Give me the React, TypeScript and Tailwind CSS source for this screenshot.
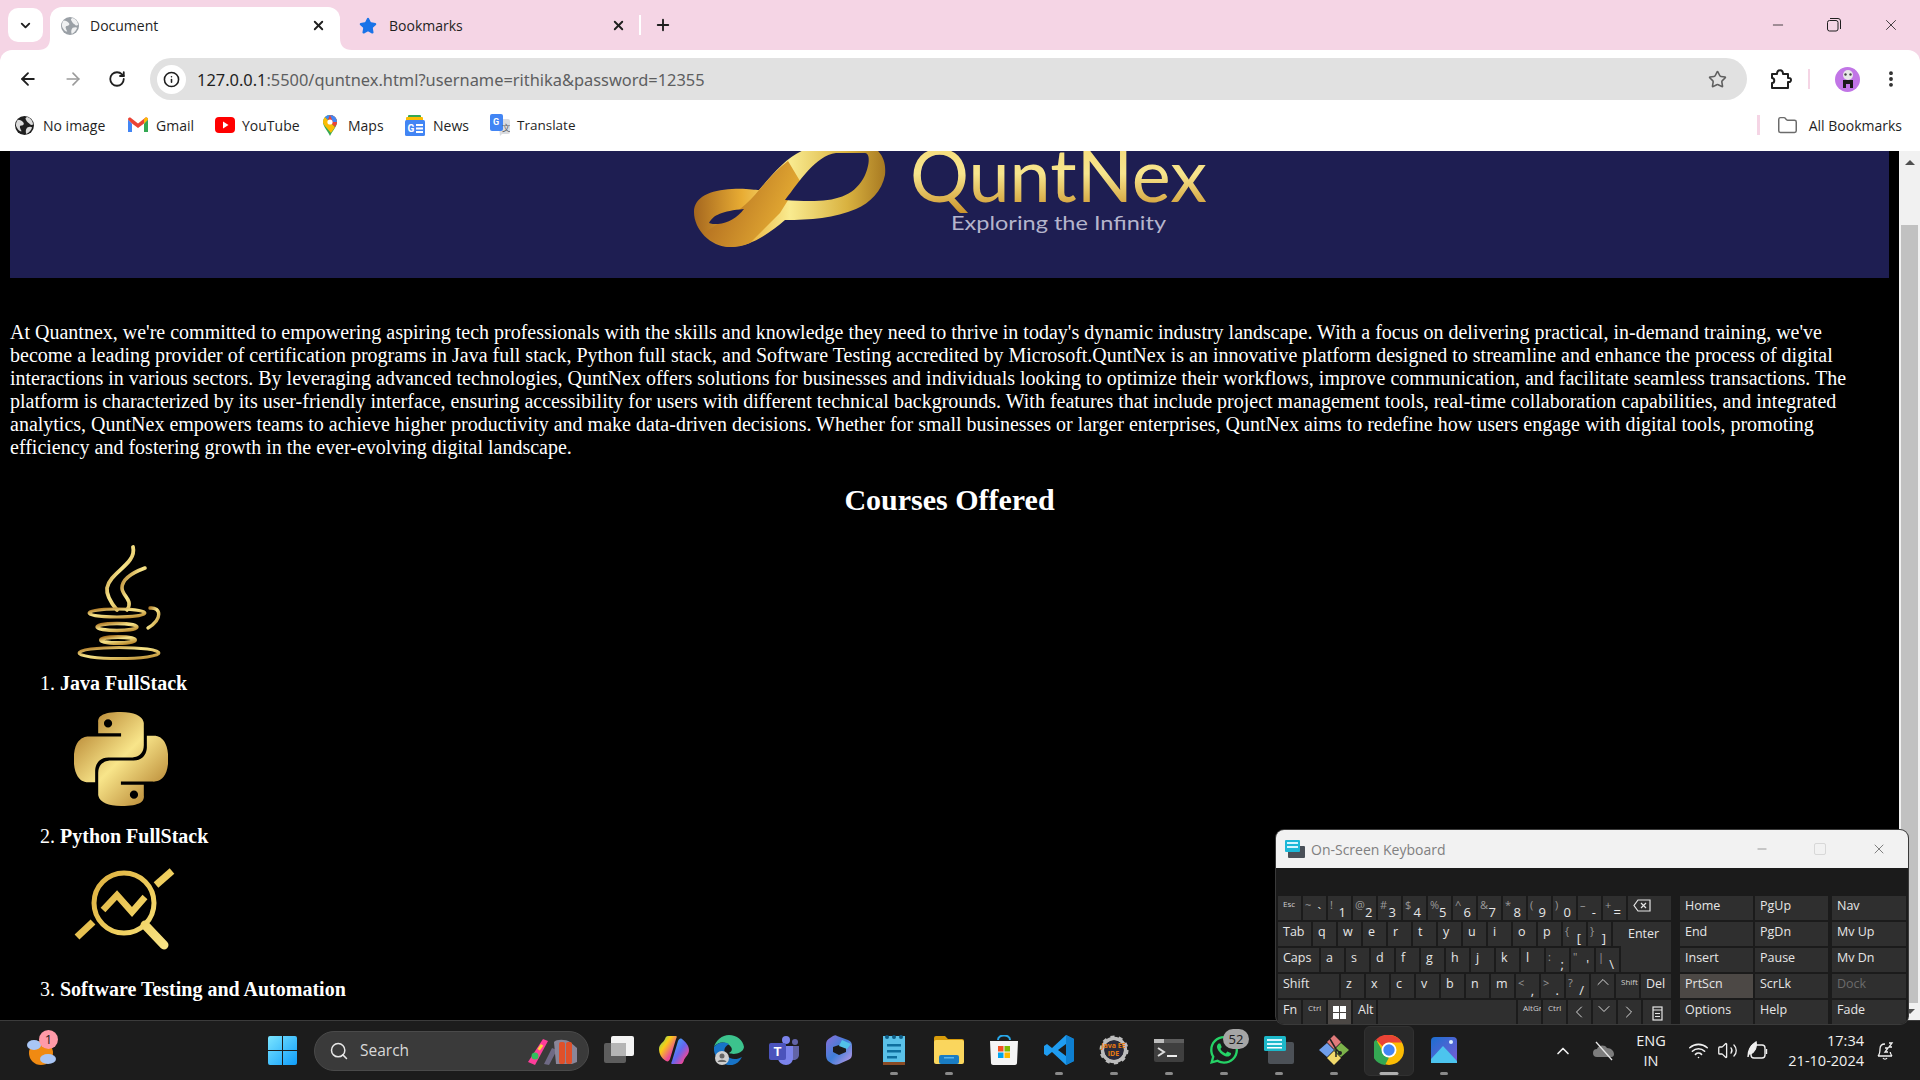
import React from "react";
import { ArrowLeft, ArrowRight, RotateCw, Info, Star, X, Plus, ChevronDown, Minus, Folder, EllipsisVertical, Search, ChevronUp, ChevronLeft, ChevronRight, Wifi, Volume2 } from "lucide-react";
import { SiPython } from "react-icons/si";
import { FaWhatsapp } from "react-icons/fa";

const Globe = ({ c = "#9aa0a6", s = 18 }: { c?: string; s?: number }) => (
  <svg width={s} height={s} viewBox="0 0 20 20">
    <circle cx="10" cy="10" r="10" fill={c} />
    <path d="M3 4c3 0 4 1 6 3 1 2-1 3-3 3-2 1 0 4 1 6-2 1-5-3-6-6 0-3 1-5 2-6zM13 1c3 1 6 4 6 8-2 1-3 0-4-1-2-1-3-3-4-5 0-1 1-2 2-2zM13 12c2-1 4-1 5 0-1 3-3 5-6 7-1-2-1-5 1-7z" fill="#fff" opacity="0.85" />
  </svg>
);

const Gmail = () => (
  <svg width="20" height="16" viewBox="0 0 20 16">
    <path d="M0 2.5V15h4V6.5z" fill="#4285f4" />
    <path d="M16 6.5V15h4V2.5z" fill="#34a853" />
    <path d="M0 2.5C0 .5 2 0 3 1l7 5.5L17 1c1-1 3-.5 3 1.5L16 6.5 10 11 4 6.5z" fill="#ea4335" />
    <path d="M16 2.5l1-1.5c1-1 3-.5 3 1.5L16 6.5z" fill="#fbbc04" />
  </svg>
);
const YouTube = () => (
  <svg width="20" height="16" viewBox="0 0 20 16">
    <rect width="20" height="16" rx="4" fill="#f00" />
    <path d="M8 4.5l5.5 3.5L8 11.500z" fill="#fff" />
  </svg>
);
const Maps = () => (
  <svg width="14" height="21" viewBox="0 0 14 21">
    <path d="M7 21C5 16 0 12 0 7a7 7 0 0 1 14 0c0 5-5 9-7 14z" fill="#34a853" />
    <path d="M2 2L12 12c-1 2-3 4-4 6L1.500 10.500C.5 9 0 8 0 7c0-2 1-4 2-5z" fill="#fbbc04" />
    <path d="M2 2a7 7 0 0 1 5-2l-2 5z" fill="#4285f4" />
    <path d="M7 0a7 7 0 0 1 7 7c0 2-1 3.500-2 5L5 5z" fill="#ea4335" />
    <path d="M7 0a7 7 0 0 1 7 7h-4z" fill="#4285f4" />
    <circle cx="7" cy="7" r="2.600" fill="#fff" />
  </svg>
);
const News = () => (
  <svg width="20" height="21" viewBox="0 0 20 21">
    <rect x="3" y="0" width="13" height="8" rx="1" fill="#34a853" />
    <rect x="1" y="2" width="17" height="7" rx="1" fill="#fbbc04" />
    <rect x="0" y="5" width="20" height="16" rx="1.500" fill="#4285f4" />
    <text x="2.500" y="17" fontSize="10" fontWeight="700" fill="#fff" fontFamily="Roboto">G</text>
    <rect x="11" y="9" width="7" height="2" fill="#fff" />
    <rect x="11" y="12.500" width="7" height="2" fill="#fff" />
    <rect x="11" y="16" width="7" height="2" fill="#fff" />
  </svg>
);
const Translate = () => (
  <svg width="20" height="22" viewBox="0 0 20 22">
    <path d="M8 5h10a2 2 0 0 1 2 2v11a2 2 0 0 1-2 2h-6l-2 2z" fill="#dadce0" />
    <rect x="0" y="0" width="13" height="17" rx="2" fill="#4285f4" />
    <text x="3" y="11" fontSize="9" fontWeight="700" fill="#fff" fontFamily="Roboto">G</text>
    <text x="12" y="17" fontSize="9" fill="#5f6368" fontFamily="Roboto">文</text>
  </svg>
);

const TabCorner = ({ side }: { side: "l" | "r" }) => (
  <svg width="12" height="12" viewBox="0 0 12 12" className={side === "l" ? "absolute bottom-0 -left-[12px]" : "absolute bottom-0 -right-[12px]"}>
    <path d={side === "l" ? "M12 0V12H0C8 12 12 8 12 0z" : "M0 0V12H12C4 12 0 8 0 0z"} fill="#fff" />
  </svg>
);

function Chrome() {
  return (
    <div className="shrink-0 bg-[#f5d5e5]">
      <div className="h-[50px] flex items-start relative">
        <div className="ml-[8px] mt-[8px] w-[35px] h-[34px] rounded-[10px] bg-white flex items-center justify-center">
          <ChevronDown size={15} strokeWidth={3} color="#1f1f1f" />
        </div>
        <div className="relative ml-[7px] mt-[7px] w-[290px] h-[43px] bg-white rounded-t-[12px] flex items-center pb-[6px] pl-[11px] pr-[14px]">
          <TabCorner side="l" />
          <TabCorner side="r" />
          <Globe />
          <span className="ml-[11px] text-[14px] text-[#1f1f1f] flex-1">Document</span>
          <X size={15} strokeWidth={3} color="#1f1f1f" />
        </div>
        <div className="w-[300px] h-[43px] mt-[7px] flex items-center pb-[6px] pl-[19px] pr-[14px]">
          <Star size={18} fill="#1a73e8" color="#1a73e8" />
          <span className="ml-[12px] text-[14px] text-[#1f1f1f] flex-1">Bookmarks</span>
          <X size={15} strokeWidth={3} color="#1f1f1f" />
        </div>
        <div className="w-[2px] h-[20px] mt-[15px] -ml-[1px] bg-white" />
        <Plus size={18} strokeWidth={2.500} color="#1f1f1f" className="ml-[13px] mt-[16px]" />
        <div className="ml-auto flex items-center h-[50px] pb-[1px] pr-[20px] gap-[41px]">
          <Minus size={16} strokeWidth={1.200} color="#1f1f1f" />
          <svg width="14" height="14" viewBox="0 0 14 14" fill="none" stroke="#1f1f1f" strokeWidth="1"><rect x="0.500" y="2.500" width="10.500" height="10.500" rx="2" /><path d="M3 .5h8a2.500 2.500 0 0 1 2.500 2.500v8" /></svg>
          <X size={18} strokeWidth={1.100} color="#1f1f1f" />
        </div>
      </div>
      <div className="bg-white rounded-t-[12px]">
        <div className="h-[50px] flex items-start pt-[8px]">
          <div className="w-[150px] h-[42px] flex items-center pl-[18px] gap-[25px]">
            <ArrowLeft size={20} strokeWidth={2.200} color="#1f1f1f" />
            <ArrowRight size={20} strokeWidth={2} color="#9b9b9b" />
            <RotateCw size={18} strokeWidth={2.400} color="#1f1f1f" />
          </div>
          <div className="w-[1597px] h-[42px] rounded-full bg-[#e1e1e1] flex items-center pl-[7px] pr-[20px]">
            <div className="w-[29px] h-[29px] rounded-full bg-white flex items-center justify-center">
              <Info size={17} strokeWidth={2.200} color="#1f1f1f" />
            </div>
            <span className="ml-[11px] pt-[2px] text-[16.400px] text-[#5d5e60] flex-1 font-['Noto_Sans']"><span className="text-[#1f1f1f]">127.0.0.1</span>:5500/quntnex.html?username=rithika&password=12355</span>
            <Star size={19} strokeWidth={2} color="#5f5f5f" />
          </div>
          <div className="flex-1 h-[42px] flex items-center relative">
            <svg width="22" height="22" viewBox="0 0 22 22" className="ml-[23px]" fill="none" stroke="#1f1f1f" strokeWidth="2" strokeLinejoin="round"><path d="M2 6h5c0-5 6-5 6 0h5v4c4-1 4 5 0 4v6H2v-5c3 0 3-5 0-5z" /></svg>
            <div className="ml-[16px] w-[2px] h-[20px] bg-[#f5d5e5]" />
            <div className="ml-[25px] w-[25px] h-[25px] rounded-full bg-[#c175e6] flex items-center justify-center overflow-hidden">
              <svg width="16" height="20" viewBox="0 0 16 20"><circle cx="8" cy="6" r="5" fill="#e8e8e8" /><circle cx="5.500" cy="5.500" r="1.200" fill="#444" /><circle cx="10.500" cy="5.500" r="1.200" fill="#444" /><path d="M3 11h10v8h-3v-4H6v4H3z" fill="#1a1a1a" /></svg>
            </div>
            <EllipsisVertical size={20} strokeWidth={2.600} color="#2a2a2a" className="ml-[21px]" />
          </div>
        </div>
        <div className="h-[51px] flex items-center pb-[1px] text-[14px] text-[#1f1f1f]">
          <div className="ml-[15px] w-[20px]"><Globe c="#1f1f1f" s={19} /></div>
          <span className="ml-[8px] w-[85px]">No image</span>
          <Gmail />
          <span className="ml-[8px] w-[59px]">Gmail</span>
          <YouTube />
          <span className="ml-[7px] w-[81px]">YouTube</span>
          <Maps />
          <span className="ml-[11px] w-[57px]">Maps</span>
          <News />
          <span className="ml-[8px] w-[57px]">News</span>
          <Translate />
          <span className="ml-[7px] text-[13.500px]">Translate</span>
          <div className="ml-auto w-[3px] h-[20px] bg-[#f5d5e5]" />
          <Folder size={21} strokeWidth={1.700} color="#6b6b6b" className="ml-[17px]" />
          <span className="ml-[11px] mr-[18px]">All Bookmarks</span>
        </div>
      </div>
    </div>
  );
}

function Banner() {
  return (
    <div className="h-[127px] bg-[#1e1e52] overflow-hidden">
      <svg width="1879" height="127" viewBox="0 0 1879 127" className="block">
        <defs>
          <linearGradient id="rib" x1="0" x2="1" y1="0" y2="0">
            <stop offset="0" stopColor="#a5671f" />
            <stop offset="0.25" stopColor="#e8ac33" />
            <stop offset="0.5" stopColor="#f9eb90" />
            <stop offset="0.8" stopColor="#d9b240" />
            <stop offset="1" stopColor="#a87a22" />
          </linearGradient>
          <linearGradient id="rib2" x1="0" x2="1" y1="0.2" y2="0.6">
            <stop offset="0" stopColor="#a9631d" />
            <stop offset="1" stopColor="#eab235" />
          </linearGradient>
          <linearGradient id="txt" x1="0" x2="0" y1="0" y2="1">
            <stop offset="0" stopColor="#f6d872" />
            <stop offset="0.5" stopColor="#f7e58d" />
            <stop offset="1" stopColor="#c68a1f" />
          </linearGradient>
        </defs>
        <path d="M684 61C684 46 700 39 722 38C735 37 745 39 749 39C765 20 780 3 797 -2L866 -2C874 5 876 14 875 24C872 40 860 52 846 58C825 67 800 69 775 69C762 80 742 96 720 96C700 96 684 78 684 61Z" fill="url(#rib)" />
        <path d="M749 39C758 29 767 18 778 10L790 30L770 62L740 92C733 95 726 96 720 96C712 96 700 90 694 82L730 58C738 52 744 45 749 39Z" fill="url(#rib2)" />
        <path d="M699 72C703 64 712 60 734 58C727 67 718 72 708 73C704 73 701 73 699 72Z" fill="#1e1e52" />
        <path d="M775 49C790 30 805 5 826 2L855 2C862 3 858 20 853 28C840 50 815 52 775 49Z" fill="#1e1e52" />
        <text x="900" y="51" fontSize="74" fontWeight="400" fontFamily="Lato, sans-serif" fill="url(#txt)" textLength="297" lengthAdjust="spacingAndGlyphs">QuntNex</text>
        <text x="941" y="79" fontSize="19" fontFamily="Lato, sans-serif" fill="#b5b5cc" textLength="215" lengthAdjust="spacingAndGlyphs">Exploring the Infinity</text>
      </svg>
    </div>
  );
}

const JavaIcon = () => (
  <svg width="120" height="130" viewBox="0 0 120 130" fill="none" stroke="url(#gold)" strokeLinecap="round" className="block">
    <path d="M73 5C77 22 50 30 47 46C46 54 52 62 57 68" strokeWidth="3.800" />
    <path d="M85 26C74 30 62 36 62 46C62 54 74 58 67 68" strokeWidth="3.600" />
    <ellipse cx="57" cy="71" rx="28" ry="4" strokeWidth="3" />
    <ellipse cx="57" cy="85" rx="20" ry="3.500" strokeWidth="3.400" />
    <ellipse cx="58" cy="98" rx="17" ry="3" strokeWidth="4" />
    <ellipse cx="59" cy="111" rx="40" ry="5.500" strokeWidth="3" />
    <path d="M90 66C101 65 103 77 88 86" strokeWidth="3.400" />
  </svg>
);
const TestIcon = () => (
  <svg width="120" height="130" viewBox="0 0 120 130" fill="none" stroke="url(#gold3)" className="block">
    <circle cx="64" cy="55" r="30" strokeWidth="5" />
    <path d="M43 62L57 47L72 64L85 49" strokeWidth="6.500" strokeLinejoin="miter" />
    <path d="M85 77L104 97" strokeWidth="9" strokeLinecap="round" />
    <path d="M17 89L33 74" strokeWidth="7" />
    <path d="M96 37L112 23" strokeWidth="7" />
  </svg>
);

const courses = [
  { n: "Java FullStack", icon: <JavaIcon /> },
  { n: "Python FullStack", icon: <div className="w-[120px] h-[130px] pl-[14px] pt-[17px]"><SiPython size={94} fill="url(#gold2)" /></div> },
  { n: "Software Testing and Automation", icon: <TestIcon /> },
];

function Page() {
  return (
    <div className="flex-1 flex min-h-0 bg-black">
      <div className="flex-1 px-[10px] text-white font-['Liberation_Serif',serif] text-[20px] leading-[23px] overflow-hidden">
        <svg width="0" height="0" className="absolute">
          <defs>
            <linearGradient id="gold" x1="0" x2="1" y1="0" y2="1">
              <stop offset="0" stopColor="#a8701f" /><stop offset="0.45" stopColor="#f8e58a" /><stop offset="1" stopColor="#b8862a" />
            </linearGradient>
            <linearGradient id="gold2" x1="0" x2="1" y1="0" y2="1">
              <stop offset="0" stopColor="#a8701f" /><stop offset="0.5" stopColor="#f8e58a" /><stop offset="1" stopColor="#a8701f" />
            </linearGradient>
            <linearGradient id="gold3" gradientUnits="userSpaceOnUse" x1="20" x2="110" y1="20" y2="100">
              <stop offset="0" stopColor="#d8a838" /><stop offset="0.6" stopColor="#f0d060" /><stop offset="1" stopColor="#f8e58a" />
            </linearGradient>
          </defs>
        </svg>
        <Banner />
        <p className="mt-[43px]">At Quantnex, we're committed to empowering aspiring tech professionals with the skills and knowledge they need to thrive in today's dynamic industry landscape. With a focus on delivering practical, in-demand training, we've become a leading provider of certification programs in Java full stack, Python full stack, and Software Testing accredited by Microsoft.QuntNex is an innovative platform designed to streamline and enhance the process of digital interactions in various sectors. By leveraging advanced technologies, QuntNex offers solutions for businesses and individuals looking to optimize their workflows, improve communication, and facilitate seamless transactions. The platform is characterized by its user-friendly interface, ensuring accessibility for users with different technical backgrounds. With features that include project management tools, real-time collaboration capabilities, and integrated analytics, QuntNex empowers teams to achieve higher productivity and make data-driven decisions. Whether for small businesses or larger enterprises, QuntNex aims to redefine how users engage with digital tools, promoting efficiency and fostering growth in the ever-evolving digital landscape.</p>
        <h1 className="mt-[24px] text-center text-[30px] leading-[33px] font-bold">Courses Offered</h1>
        <ol className="list-decimal pl-[50px] mt-[26px]">
          {courses.map((c) => (
            <li key={c.n}>
              {c.icon}
              <b>{c.n}</b>
            </li>
          ))}
        </ol>
      </div>
      <div className="w-[21px] bg-[#f1f1f1] shrink-0 flex flex-col items-center">
        <div className="mt-[9px] w-0 h-0 border-x-[5px] border-x-transparent border-b-[5px] border-b-[#505050]" />
        <div className="mt-[60px] w-[17px] flex-1 bg-[#c1c1c1]" />
        <div className="h-[17px] w-full flex justify-center items-center">
          <div className="w-0 h-0 border-x-[5px] border-x-transparent border-t-[5px] border-t-[#505050]" />
        </div>
      </div>
    </div>
  );
}

const Key = ({ w = 23, a, b, lit, muted, small, children, cn = "" }: { w?: number; a?: string; b?: string; lit?: boolean; muted?: boolean; small?: boolean; children?: React.ReactNode; cn?: string }) => (
  <div style={{ width: w }} className={`h-[24px] shrink-0 flex justify-between overflow-hidden ${lit ? "bg-[#4c4845]" : "bg-[#2f2f2f]"} ${cn}`}>
    {children ? children : a && b ? (
      <>
        <span className="pl-[2px] text-[11px] leading-[18px] text-[#9a9a9a]">{a}</span>
        <span className="pr-[5px] pt-[7px] text-[13px] leading-[18px] text-[#e6e6e6]">{b}</span>
      </>
    ) : small ? (
      <span className="pl-[5px] pt-[1px] text-[8px] leading-[14px] text-[#cfcfcf]">{a}</span>
    ) : (
      <span className={`pl-[5px] text-[12.500px] leading-[19px] ${muted ? "text-[#6b6b6b]" : "text-[#e6e6e6]"}`}>{a}</span>
    )}
  </div>
);

const NavKey = ({ a, w = 73, lit, muted }: { a: string; w?: number; lit?: boolean; muted?: boolean }) => <Key a={a} w={w} lit={lit} muted={muted} />;

function Keyboard() {
  const row1: [string, string][] = [["!", "1"], ["@", "2"], ["#", "3"], ["$", "4"], ["%", "5"], ["^", "6"], ["&", "7"], ["*", "8"], ["(", "9"], [")", "0"], ["–", "-"], ["+", "="]];
  return (
    <div className="absolute left-[1276px] top-[830px] w-[632px] h-[194px] rounded-[8px] overflow-hidden bg-[#1b1b1b] shadow-[0_0_0_1px_#3a3a3a] font-['Open_Sans'] z-10">
      <div className="h-[38px] bg-[#f2f2f2] flex items-center pl-[9px] pr-[21px]">
        <svg width="20" height="18" viewBox="0 0 20 18"><rect x="3" y="6" width="17" height="12" rx="1" fill="#4a5058" /><rect width="15" height="12" rx="1" fill="#1cb8d8" /><rect x="2" y="2" width="11" height="2" fill="#d4f5ff" /><rect x="2" y="6" width="11" height="2" fill="#d4f5ff" /></svg>
        <span className="ml-[6px] text-[14px] text-[#808080]">On-Screen Keyboard</span>
        <Minus size={14} strokeWidth={1.200} color="#777" className="ml-auto" />
        <div className="ml-[45px] w-[12px] h-[12px] rounded-[2px] border border-[#d8d8d8]" />
        <X size={16} strokeWidth={1.100} color="#555" className="ml-[45px]" />
      </div>
      <div className="pt-[28px] pl-[2px] flex text-[#e6e6e6]">
        <div className="w-[394px] flex flex-col gap-[2px] mr-[8px]">
          <div className="flex gap-[2px]">
            <Key a="Esc" small /><Key a="~" b="`" />
            {row1.map((k) => <Key key={k[1]} a={k[0]} b={k[1]} />)}
            <Key w={43}><svg width="18" height="13" viewBox="0 0 18 13" fill="none" stroke="#e6e6e6" strokeWidth="1.200" className="ml-[5px] mt-[3px]"><path d="M5 1h12v11H5L1 6.500z" /><path d="M8 4l5 5M13 4l-5 5" /></svg></Key>
          </div>
          <div className="flex gap-[2px]">
            <Key w={33} a="Tab" />
            {"qwertyuiop".split("").map((k) => <Key key={k} a={k} />)}
            <Key a="{" b="[" /><Key a="}" b="]" />
            <Key w={58}><span className="pl-[15px] pt-[2px] text-[12.500px] leading-[20px]">Enter</span></Key>
          </div>
          <div className="flex gap-[2px]">
            <Key w={41} a="Caps" />
            {"asdfghjkl".split("").map((k) => <Key key={k} a={k} />)}
            <Key a=":" b=";" /><Key a={'"'} b="'" /><Key a="|" b="\" />
            <Key w={50} cn="-mt-[2px] h-[26px]"> </Key>
          </div>
          <div className="flex gap-[2px]">
            <Key w={61} a="Shift" />
            {"zxcvbnm".split("").map((k) => <Key key={k} a={k} />)}
            <Key a="<" b="," /><Key a=">" b="." /><Key a="?" b="/" />
            <Key><ChevronUp size={20} strokeWidth={1.100} className="ml-[2px] -mt-[2px]" /></Key>
            <Key a="Shift" small />
            <Key w={30} a="Del" />
          </div>
          <div className="flex gap-[2px]">
            <Key a="Fn" /><Key a="Ctrl" small />
            <Key lit><svg width="13" height="13" viewBox="0 0 13 13" fill="#fff" className="ml-[5px] mt-[6px]"><rect width="6" height="6" /><rect x="7" width="6" height="6" /><rect y="7" width="6" height="6" /><rect x="7" y="7" width="6" height="6" /></svg></Key>
            <Key a="Alt" />
            <Key w={138}> </Key>
            <Key a="AltGr" small /><Key a="Ctrl" small />
            <Key><ChevronLeft size={20} strokeWidth={1.100} className="ml-[1px] mt-[2px]" /></Key>
            <Key><ChevronDown size={20} strokeWidth={1.100} className="ml-[1px] -mt-[1px]" /></Key>
            <Key><ChevronRight size={20} strokeWidth={1.100} className="ml-[1px] mt-[2px]" /></Key>
            <Key w={28}><svg width="11" height="15" viewBox="0 0 11 15" fill="none" stroke="#e6e6e6" strokeWidth="1.200" className="ml-[9px] mt-[6px]"><rect x="1" y="1" width="9" height="13" /><path d="M1 4h9M3 7.500h5M3 10.500h5" /></svg></Key>
          </div>
        </div>
        <div className="grid grid-cols-[73px_73px] gap-[2px] h-fit">
          {["Home", "PgUp", "End", "PgDn", "Insert", "Pause"].map((k) => <NavKey key={k} a={k} />)}
          <NavKey a="PrtScn" lit /><NavKey a="ScrLk" /><NavKey a="Options" /><NavKey a="Help" />
        </div>
        <div className="ml-[4px] flex flex-col gap-[2px]">
          <NavKey w={74} a="Nav" /><NavKey w={74} a="Mv Up" /><NavKey w={74} a="Mv Dn" /><NavKey w={74} a="Dock" muted /><NavKey w={74} a="Fade" />
        </div>
      </div>
    </div>
  );
}

const Chromium = () => (
  <svg width="30" height="30" viewBox="0 0 30 30">
    <circle cx="15" cy="15" r="15" fill="#fbbc04" />
    <path d="M15 0a15 15 0 0 1 13 7.500H15a7.500 7.500 0 0 0-6.500 3.750L2 4.500A15 15 0 0 1 15 0z" fill="#ea4335" />
    <path d="M2 4.500l6.500 11.500A7.500 7.500 0 0 0 15 22.500L11 30A15 15 0 0 1 2 4.500z" fill="#34a853" />
    <circle cx="15" cy="15" r="7.500" fill="#fff" />
    <circle cx="15" cy="15" r="5.700" fill="#4285f4" />
  </svg>
);

const apps: { icon: React.ReactNode; dot?: boolean; active?: boolean; badge?: boolean }[] = [
  { icon: <svg width="30" height="30" viewBox="0 0 30 30"><rect x="0" y="8" width="22" height="20" rx="2" fill="#5d5d5d" /><rect x="7" y="1" width="23" height="20" rx="2" fill="#f3f3f3" /><rect x="7" y="8" width="15" height="13" fill="#b5b5b5" /></svg> },
  { icon: <svg width="30" height="30" viewBox="0 0 30 30"><defs><linearGradient id="cpa" x1="0" x2="1" y1="0" y2="1"><stop offset="0" stopColor="#4ade80" /><stop offset="0.35" stopColor="#facc15" /><stop offset="0.7" stopColor="#ec4899" /><stop offset="1" stopColor="#f97316" /></linearGradient><linearGradient id="cpb" x1="0" x2="1" y1="0" y2="1"><stop offset="0" stopColor="#38bdf8" /><stop offset="0.5" stopColor="#6366f1" /><stop offset="0.8" stopColor="#ec4899" /><stop offset="1" stopColor="#fb923c" /></linearGradient></defs><path d="M9 1h8c1 0 1 1 0 3l-6 20c-1 2-2 3-4 2C2 23 0 18 0 14 0 9 5 7 6 4c.5-2 1.500-3 3-3z" fill="url(#cpa)" /><path d="M22 29h-9c-1 0-1-1 0-3l6-20c1-2 2-3 4-2 4 3 7 7 7 11 0 5-4 7-5 10-.5 2-1.500 4-3 4z" fill="url(#cpb)" /></svg> },
  { icon: <svg width="30" height="30" viewBox="0 0 30 30"><path d="M15 0C8 0 2 5 0 12c4-6 13-6 17 0 2 3 0 5-2 6 4 2 14 1 15-6C29 5 23 0 15 0z" fill="#3cc38d" /><path d="M0 12C-1 20 5 28 14 30c6 1 11-2 14-8-5 3-12 3-16-2-3-4-2-8 3-11C9 6 3 8 0 12z" fill="#1773c7" /><circle cx="8" cy="23" r="7" fill="#cfcfcf" /><circle cx="8" cy="21" r="2.500" fill="#666" /><path d="M3.500 27c1-3 8-3 9 0z" fill="#666" /></svg> },
  { icon: <svg width="30" height="30" viewBox="0 0 30 30"><circle cx="17" cy="5" r="4" fill="#7b83eb" /><circle cx="26" cy="7" r="3" fill="#6264a7" /><path d="M20 11h10v9c0 3-3 5-5 5h-5z" fill="#6264a7" /><path d="M9 11h15v12c0 4-3 7-7 7s-8-3-8-7z" fill="#7b83eb" /><rect x="0" y="8" width="17" height="17" rx="2" fill="#4b53bc" /><text x="8.500" y="21" textAnchor="middle" fontSize="13" fontFamily="Roboto" fontWeight="700" fill="#fff">T</text></svg> },
  { icon: <svg width="26" height="30" viewBox="0 0 26 30"><defs><linearGradient id="m3" x1="0" x2="1" y1="0" y2="1"><stop offset="0" stopColor="#8b6fd8" /><stop offset="0.5" stopColor="#3f7fd9" /><stop offset="1" stopColor="#c99be6" /></linearGradient></defs><path d="M11 1l11 4c3 1 4 3 4 6v8c0 3-1 5-4 6l-9 4c-3 1-5 1-8-1L2 26c-1-1-2-3-2-6V9c0-3 2-5 4-6l3-2c2-1 3-1 4 0z" fill="url(#m3)" /><path d="M13 10l7 3v4l-7 3-6-3v-5z" fill="#1b1b1b" /><path d="M16 5l9 4-4 5-8-3z" fill="#52c1e8" /></svg> },
  { dot: true, icon: <svg width="22" height="30" viewBox="0 0 22 30"><rect y="1" width="22" height="29" fill="#5ac1e8" /><rect y="27" width="22" height="3" fill="#8a4b25" /><rect x="4" y="9" width="14" height="2.500" fill="#0e6f9e" /><rect x="4" y="15" width="14" height="2.500" fill="#0e6f9e" /><rect x="4" y="21" width="10" height="2.500" fill="#0e6f9e" /><circle cx="4" cy="2" r="2" fill="#0e5d85" /><circle cx="11" cy="2" r="2" fill="#0e5d85" /><circle cx="18" cy="2" r="2" fill="#0e5d85" /></svg> },
  { dot: true, icon: <svg width="30" height="28" viewBox="0 0 30 28"><path d="M0 2a2 2 0 0 1 2-2h9l3 3h14a2 2 0 0 1 2 2v3H0z" fill="#d89c0b" /><rect y="4" width="30" height="24" rx="2" fill="#fad65d" /><rect x="5" y="19" width="20" height="9" rx="2" fill="#1a7dc4" /><rect x="10" y="21" width="10" height="1.500" fill="#5ab5ea" /></svg> },
  { icon: <svg width="30" height="30" viewBox="0 0 30 30"><path d="M9 5c0-6 12-6 12 0" fill="none" stroke="#28a8ea" strokeWidth="2" /><path d="M1 6h28l-1 22c0 1-1 2-2 2H4c-1 0-2-1-2-2z" fill="#f4f4f4" /><rect x="9" y="11" width="5.500" height="5.500" fill="#f25022" /><rect x="15.500" y="11" width="5.500" height="5.500" fill="#7fba00" /><rect x="9" y="17.500" width="5.500" height="5.500" fill="#00a4ef" /><rect x="15.500" y="17.500" width="5.500" height="5.500" fill="#ffb900" /></svg> },
  { dot: true, icon: <svg width="30" height="30" viewBox="0 0 30 30"><path d="M22 0L30 4V26L22 30L8 17L3 21L0 19V11L3 9L8 13zM22 9L14 15L22 21z" fill="#1f9cf0" /><path d="M22 0L30 4V26L22 30z" fill="#0e7fd0" /></svg> },
  { dot: true, icon: <div className="relative w-[30px] h-[30px] flex items-center justify-center"><svg width="30" height="30" viewBox="0 0 30 30" className="absolute inset-0"><circle cx="15" cy="15" r="11.500" fill="none" stroke="#bdbdbd" strokeWidth="3.500" /><circle cx="15" cy="15" r="13" fill="none" stroke="#bdbdbd" strokeWidth="3" strokeDasharray="4 4.200" /><circle cx="15" cy="15" r="9.500" fill="#2a2a3a" /></svg><span className="relative text-[7px] leading-[8px] text-[#e87a10] text-center font-bold whitespace-pre">{"Java EE\nIDE"}</span></div> },
  { dot: true, icon: <svg width="30" height="23" viewBox="0 0 30 23"><rect width="30" height="23" rx="2" fill="#3f3f3f" /><rect width="10" height="4" fill="#bdbdbd" /><rect x="10" width="20" height="4" fill="#5d5d5d" /><path d="M4 9l6 4-6 4" fill="none" stroke="#ddd" strokeWidth="2" /><rect x="13" y="16" width="10" height="2" fill="#eee" /></svg> },
  { dot: true, badge: true, icon: <FaWhatsapp size={32} color="#25d366" /> },
  { dot: true, icon: <svg width="30" height="28" viewBox="0 0 30 28"><rect x="4" y="6" width="26" height="22" rx="2" fill="#4c5157" /><rect y="0" width="22" height="15" rx="1.500" fill="#1cb8c9" /><rect x="3" y="3" width="15" height="2" fill="#d4f5ff" /><rect x="3" y="7" width="15" height="2" fill="#d4f5ff" /><rect x="3" y="11" width="15" height="1.500" fill="#fff" /></svg> },
  { dot: true, icon: <svg width="30" height="30" viewBox="0 0 30 30"><path d="M15 0L22 7 15 14 8 7z" fill="#e07a7a" /><path d="M22 8L30 15 22 22 15 15z" fill="#7cb34a" /><path d="M8 8L15 15 8 22 0 15z" fill="#6f9eea" /><path d="M15 16L22 23 15 30 8 23z" fill="#f1d96b" /><path d="M11 4L17 14V22M17 14L21 18" stroke="#222" strokeWidth="1.500" fill="none" /><circle cx="21" cy="18" r="2" fill="#222" /></svg> },
  { dot: true, active: true, icon: <Chromium /> },
  { dot: true, icon: <svg width="26" height="26" viewBox="0 0 26 26"><defs><linearGradient id="ph" x1="0" x2="1" y1="0" y2="1"><stop offset="0" stopColor="#1b6fd0" /><stop offset="1" stopColor="#7a5bd6" /></linearGradient></defs><rect width="26" height="26" rx="4" fill="url(#ph)" /><path d="M0 22L12 9 26 24v2H0z" fill="#4cc4ee" /><circle cx="20" cy="5" r="2" fill="#dbeeff" /></svg> },
];

function Taskbar() {
  return (
    <div className="h-[60px] shrink-0 bg-[#1c1c1c] border-t border-[#3b3b3b] flex items-center text-[#f0f0f0] font-['Open_Sans'] relative">
      <div className="relative ml-[27px] w-[30px] h-[30px] shrink-0">
        <svg width="30" height="30" viewBox="0 0 30 30"><circle cx="14" cy="17" r="12" fill="#f08a12" /><ellipse cx="7" cy="9" rx="7" ry="5" fill="#a9c6f5" /><ellipse cx="21" cy="23" rx="8" ry="5" fill="#a9c6f5" /></svg>
        <div className="absolute -top-[6px] left-[12px] w-[19px] h-[19px] rounded-full bg-[#ff9aa8] text-[#1c1c1c] text-[13px] leading-[19px] text-center">1</div>
      </div>
      <div className="ml-[198px] w-[55px] flex justify-center shrink-0">
        <svg width="29" height="29" viewBox="0 0 29 29"><defs><linearGradient id="win" x1="0" x2="1" y1="0" y2="1"><stop offset="0" stopColor="#7be5ff" /><stop offset="1" stopColor="#0f9dfa" /></linearGradient></defs><path d="M0 2a2 2 0 0 1 2-2h12v14H0zM15 0h12a2 2 0 0 1 2 2v12H15zM0 15h14v14H2a2 2 0 0 1-2-2zM15 15h14v12a2 2 0 0 1-2 2H15z" fill="url(#win)" /></svg>
      </div>
      <div className="ml-[4px] w-[275px] h-[40px] rounded-full bg-[#3a3a3a] border border-[#4a4a4a] flex items-center pl-[14px] pr-[10px] shrink-0">
        <Search size={20} strokeWidth={1.800} color="#e8e8e8" />
        <span className="ml-[11px] text-[15.500px] text-[#d8d8d8] flex-1">Search</span>
        <svg width="52" height="30" viewBox="0 0 52 30"><path d="M2 26L17 3l5 2-13 24z" fill="#ff3d9a" /><circle cx="9" cy="20" r="3.500" fill="#2fbf5d" /><rect x="11" y="10" width="6" height="3" fill="#ffd23f" transform="rotate(-55 14 11)" /><path d="M18 28l8-16 5 2-8 15z" fill="#6f6a85" /><path d="M28 6c2-3 12-3 16 0l7 6v14l-5 2H30z" fill="#8a8699" /><rect x="33" y="6" width="6" height="22" rx="2" fill="#e0502a" /><rect x="40" y="6" width="6" height="22" rx="2" fill="#e0502a" /></svg>
      </div>
      <div className="ml-[2px] flex shrink-0">
        {apps.map((a, i) => (
          <div key={i} className="relative w-[55px] h-[50px] flex items-center justify-center">
            {a.active && <div className="absolute inset-y-0 left-[2.500px] right-[2.500px] rounded-[6px] bg-[#292929] border border-[#313131]" />}
            <div className="relative pb-[1px]">{a.icon}</div>
            {a.badge && <div className="absolute top-[3px] left-[27px] w-[26px] h-[20px] rounded-full bg-[#a5a5a5] text-[#1c1c1c] text-[13px] leading-[20px] text-center">52</div>}
            {a.dot && <div className={`absolute bottom-[1px] left-1/2 -translate-x-1/2 h-[3px] rounded-full ${a.active ? "w-[19px] bg-[#b0b0b0]" : "w-[8px] bg-[#8a8a8a]"}`} />}
          </div>
        ))}
      </div>
      <ChevronUp size={20} strokeWidth={2} color="#f0f0f0" className="ml-[82px]" />
      <svg width="22" height="22" viewBox="0 0 22 22" className="ml-[20px]"><path d="M4 17a4 4 0 0 1 0-8c1-4 8-5 10-1 4 0 7 3 7 6s-2 3-4 3z" fill="#7d7d7d" /><path d="M3 2l16 18" stroke="#e8e8e8" strokeWidth="1.300" /></svg>
      <div className="ml-[20px] w-[32px] text-center text-[14.500px] leading-[20px]">ENG<br />IN</div>
      <Wifi size={21} strokeWidth={1.800} className="ml-[21px]" />
      <Volume2 size={21} strokeWidth={1.500} className="ml-[8px]" />
      <svg width="22" height="20" viewBox="0 0 22 20" fill="none" stroke="#f0f0f0" strokeWidth="1.400" className="ml-[9px]"><rect x="4" y="4" width="14" height="13" rx="3" /><path d="M19.500 8v5" /><path d="M1 16C1 9 4 4 9 1c1 5-1 10-6 12" fill="#f0f0f0" /></svg>
      <div className="ml-[15px] w-[80px] text-right text-[14.500px] leading-[20px] shrink-0">17:34<br />21-10-2024</div>
      <svg width="17" height="20" viewBox="0 0 17 20" fill="none" stroke="#f0f0f0" strokeWidth="1.300" className="ml-[13px]"><path d="M1 15c2-2 2-4 2-7 0-3 2-5 5-5v0M15 15c-1-1-1.500-2-1.800-4M1 15h14M6 17c1 1.500 3 1.500 4 0" /><path d="M8 7h3l-3 4h3M12 2h3l-3 4h3" /></svg>
    </div>
  );
}

export default function App() {
  return (
    <div className="relative w-[1920px] h-[1080px] overflow-hidden flex flex-col font-['Open_Sans',sans-serif]">
      <Chrome />
      <Page />
      <Taskbar />
      <Keyboard />
    </div>
  );
}
